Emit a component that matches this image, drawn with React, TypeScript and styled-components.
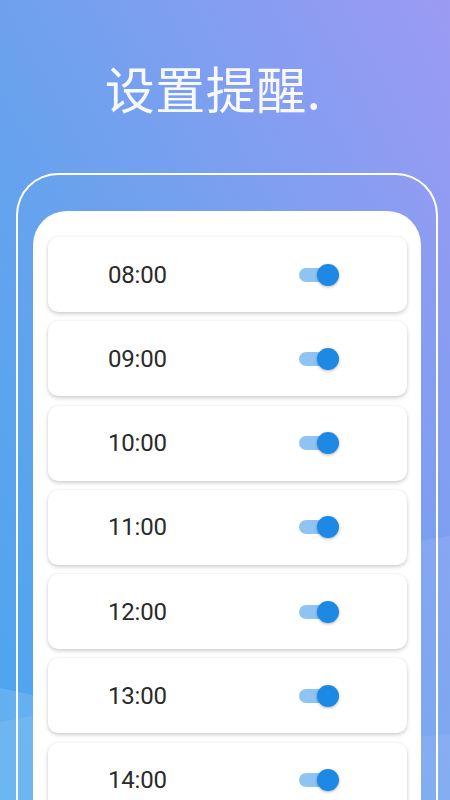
import React, { useState } from 'react';
import styled, { createGlobalStyle } from 'styled-components';

const GlobalStyle = createGlobalStyle`
  html, body {
    margin: 0;
    padding: 0;
  }
  body {
    font-family: Roboto, 'Noto Sans', 'Noto Sans CJK SC', sans-serif;
  }
`;

const Screen = styled.div`
  position: relative;
  width: 450px;
  height: 800px;
  overflow: hidden;
  background: linear-gradient(62deg, #4aa6ee 0%, #6aa2ee 45%, #9c9af3 100%);
`;

const Waves = styled.svg`
  position: absolute;
  left: 0;
  top: 0;
  pointer-events: none;
`;

const Content = styled.div`
  position: relative;
  display: flex;
  flex-direction: column;
  align-items: center;
`;

const Title = styled.h1`
  margin: 59px 24px 0 0;
  font-family: 'Noto Sans CJK SC', 'Noto Sans', sans-serif;
  font-weight: 400;
  font-size: 50px;
  line-height: 56px;
  letter-spacing: 0.5px;
  color: rgba(255, 255, 255, 0.94);
`;

const Frame = styled.div`
  box-sizing: border-box;
  width: 422px;
  height: 700px;
  margin: 58px 0 0 4px;
  padding: 36px 15px 0;
  border: 2px solid #fff;
  border-bottom: none;
  border-radius: 42px 42px 0 0;
`;

const Panel = styled.div`
  box-sizing: border-box;
  height: 100%;
  padding: 26px 14px 0 15px;
  background: #fff;
  border-radius: 34px 34px 0 0;
  display: flex;
  flex-direction: column;
  gap: 9.3px;
`;

const Card = styled.div`
  flex: 0 0 75px;
  display: flex;
  align-items: center;
  justify-content: space-between;
  padding: 0 68px 0 60px;
  background: #fff;
  border-radius: 10px;
  box-shadow: 0 2px 4px rgba(0, 0, 0, 0.18), 0 0 3px rgba(0, 0, 0, 0.06);
`;

const Time = styled.span`
  font-family: Roboto, 'Noto Sans', sans-serif;
  font-size: 24px;
  color: #2a2a2a;
  letter-spacing: -0.2px;
`;

const Switch = styled.button<{ $on: boolean }>`
  position: relative;
  width: 40px;
  height: 24px;
  padding: 0;
  border: none;
  background: none;
  cursor: pointer;

  &::before {
    content: '';
    position: absolute;
    left: 0;
    top: 5px;
    width: 34px;
    height: 14px;
    border-radius: 7px;
    background: ${(p) => (p.$on ? '#8fc3f2' : '#c4c4c4')};
  }

  &::after {
    content: '';
    position: absolute;
    top: 1px;
    left: ${(p) => (p.$on ? '18px' : '0')};
    width: 22px;
    height: 22px;
    border-radius: 50%;
    background: ${(p) => (p.$on ? '#1e88e5' : '#fafafa')};
    box-shadow: 0 1px 3px rgba(0, 0, 0, 0.3);
  }
`;

const times = ['08:00', '09:00', '10:00', '11:00', '12:00', '13:00', '14:00'];

const ReminderRow = ({ time }: { time: string }) => {
  const [on, setOn] = useState(true);
  return (
    <Card>
      <Time>{time}</Time>
      <Switch $on={on} onClick={() => setOn(!on)} aria-label={time} />
    </Card>
  );
};

export default function App() {
  return (
    <>
      <GlobalStyle />
      <Screen>
        <Waves width="450" height="800" viewBox="0 0 450 800">
          <path d="M0 688 C 60 700, 100 712, 140 720 L 140 800 L 0 800 Z" fill="rgba(255,255,255,0.12)" />
          <path d="M0 722 C 50 712, 100 705, 140 700 L 140 800 L 0 800 Z" fill="rgba(255,255,255,0.08)" />
          <path d="M300 560 C 360 550, 410 542, 450 536 L 450 800 L 300 800 Z" fill="rgba(255,255,255,0.08)" />
          <path d="M300 748 C 360 742, 410 738, 450 734 L 450 800 L 300 800 Z" fill="rgba(255,255,255,0.07)" />
        </Waves>
        <Content>
          <Title>设置提醒.</Title>
          <Frame>
            <Panel>
              {times.map((t) => (
                <ReminderRow key={t} time={t} />
              ))}
            </Panel>
          </Frame>
        </Content>
      </Screen>
    </>
  );
}
